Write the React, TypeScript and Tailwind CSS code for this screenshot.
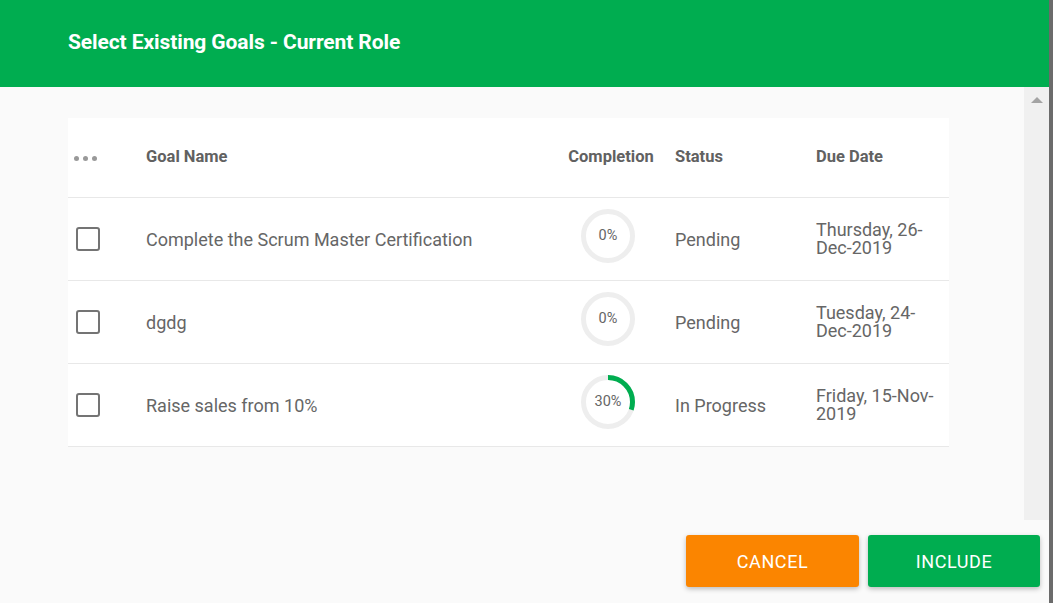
import React from "react";

interface Goal {
  name: string;
  percent: number;
  status: string;
  due: string;
}

const goals: Goal[] = [
  { name: "Complete the Scrum Master Certification", percent: 0, status: "Pending", due: "Thursday, 26-Dec-2019" },
  { name: "dgdg", percent: 0, status: "Pending", due: "Tuesday, 24-Dec-2019" },
  { name: "Raise sales from 10%", percent: 30, status: "In Progress", due: "Friday, 15-Nov-2019" },
];

const Ring: React.FC<{ percent: number }> = ({ percent }) => {
  const r = 24.5;
  const c = 2 * Math.PI * r;
  return (
    <div className="relative w-[54px] h-[54px]">
      <svg width="54" height="54" viewBox="0 0 54 54" className="-rotate-90">
        <circle cx="27" cy="27" r={r} fill="none" stroke="#eeeeee" strokeWidth="5" />
        {percent > 0 && (
          <circle
            cx="27"
            cy="27"
            r={r}
            fill="none"
            stroke="#00ad50"
            strokeWidth="5"
            strokeDasharray={`${(c * percent) / 100} ${c}`}
          />
        )}
      </svg>
      <span className="absolute inset-0 flex items-center justify-center text-[14.5px] text-[#666]">
        {percent}%
      </span>
    </div>
  );
};

const cols = "grid grid-cols-[68px_421px_108px_141px_143px]";

const App: React.FC = () => {
  return (
    <div className="flex w-[1053px] h-[603px] overflow-hidden font-['Roboto',sans-serif] bg-[#fafafa]">
      <div className="flex flex-col w-[1049px]">
        <div className="h-[87px] bg-[#00ad50] flex items-center pl-[68px] shrink-0">
          <h1 className="text-white font-bold text-[21px] tracking-[-0.1px] -mt-[2px]">
            Select Existing Goals - Current Role
          </h1>
        </div>

        <div className="flex h-[433px]">
          <div className="flex-1 pl-[68px] pt-[31px]">
            <div className="w-[881px] bg-white">
              <div className={`${cols} h-[80px] items-center border-b border-[#e8e8e8] text-[16.5px] font-bold text-[#616161]`}>
                <div className="flex gap-[4px] pl-[6px] pt-[2px]">
                  <span className="w-[5px] h-[5px] rounded-full bg-[#999]" />
                  <span className="w-[5px] h-[5px] rounded-full bg-[#999]" />
                  <span className="w-[5px] h-[5px] rounded-full bg-[#999]" />
                </div>
                <div className="pl-[10px]">Goal Name</div>
                <div className="text-center">Completion</div>
                <div className="pl-[10px]">Status</div>
                <div className="pl-[10px]">Due Date</div>
              </div>
              {goals.map((g) => (
                <div key={g.name} className={`${cols} h-[83px] items-center border-b border-[#e8e8e8] text-[18px] text-[#666]`}>
                  <div className="pl-[8px]">
                    <div className="w-[24px] h-[24px] rounded-[3px] border-2 border-[#747474]" />
                  </div>
                  <div className="pl-[10px]">{g.name}</div>
                  <div className="flex justify-center pr-[6px] mb-[6px]">
                    <Ring percent={g.percent} />
                  </div>
                  <div className="pl-[10px]">{g.status}</div>
                  <div className="pl-[10px] pr-[8px] leading-[18px]">{g.due}</div>
                </div>
              ))}
            </div>
          </div>
          <div className="w-[25px] bg-[#f0f0f0] flex justify-center pt-[10px]">
            <div className="w-0 h-0 border-l-[6px] border-r-[6px] border-b-[6px] border-l-transparent border-r-transparent border-b-[#a3a3a3]" />
          </div>
        </div>

        <div className="flex justify-end gap-[9px] pt-[15px] pr-[9px]">
          <button className="w-[173px] h-[52px] rounded-[3px] bg-[#fb8500] text-white text-[18px] font-normal tracking-[0.6px] shadow-[0_2px_5px_rgba(0,0,0,0.25)]">
            CANCEL
          </button>
          <button className="w-[172px] h-[52px] rounded-[3px] bg-[#00ad50] text-white text-[18px] font-normal tracking-[0.6px] shadow-[0_2px_5px_rgba(0,0,0,0.25)]">
            INCLUDE
          </button>
        </div>
      </div>
      <div className="w-[4px] bg-[#6b6b6b]" />
    </div>
  );
};

export default App;
